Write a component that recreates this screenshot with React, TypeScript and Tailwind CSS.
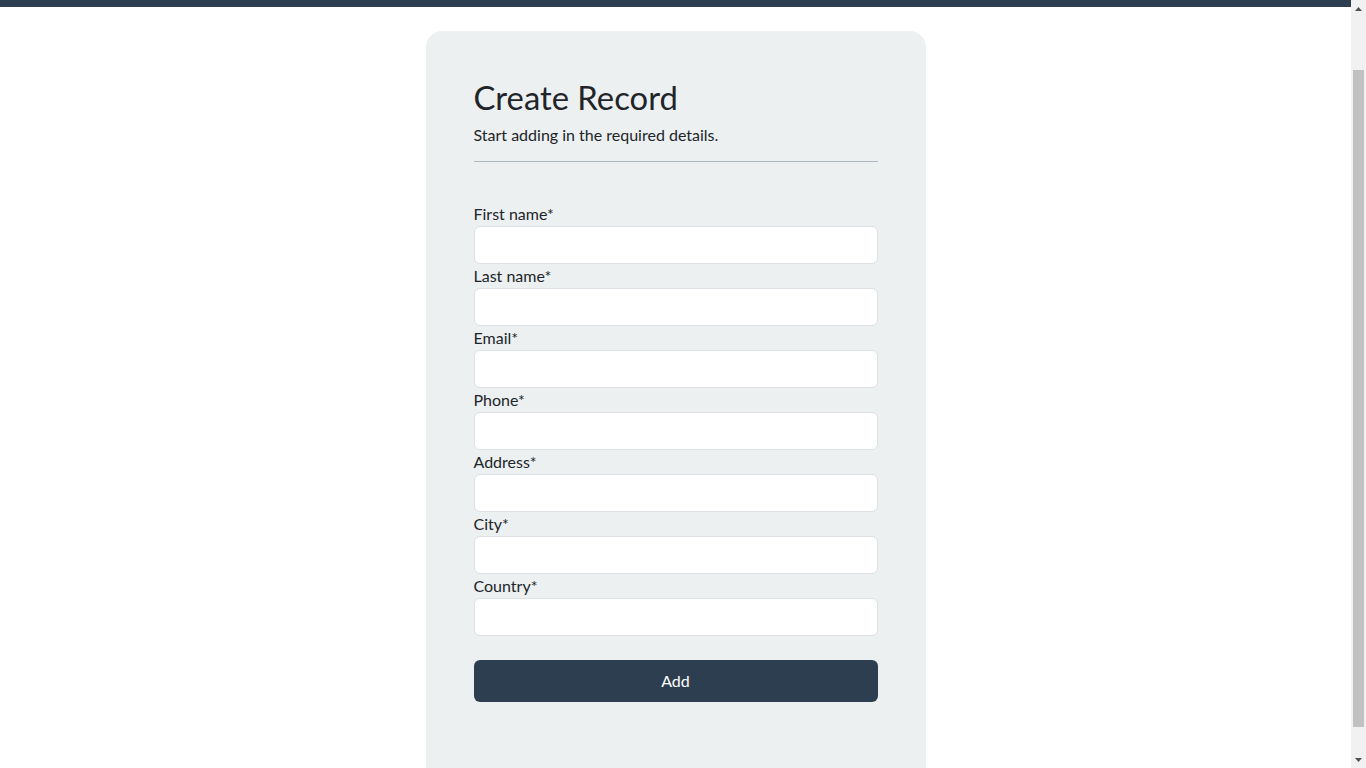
import React, { useLayoutEffect } from "react";

const fields = ["First name", "Last name", "Email", "Phone", "Address", "City", "Country"];

function FakeScrollbar() {
  return (
    <div className="fixed right-0 top-0 flex h-screen w-[15px] flex-col bg-[#f1f1f1]">
      <div className="flex h-[17px] items-center justify-center">
        <svg width="7" height="4" viewBox="0 0 7 4">
          <path d="M0 4 L3.5 0 L7 4 Z" fill="#505050" />
        </svg>
      </div>
      <div className="flex-1 px-[2px] pt-[53px] pb-[24px]">
        <div className="h-full w-full bg-[#c1c1c1]" />
      </div>
      <div className="flex h-[17px] items-center justify-center">
        <svg width="7" height="4" viewBox="0 0 7 4">
          <path d="M0 0 L7 0 L3.5 4 Z" fill="#505050" />
        </svg>
      </div>
    </div>
  );
}

export default function App() {
  useLayoutEffect(() => {
    window.scrollTo(0, 62);
  }, []);
  return (
    <div className="min-h-screen bg-white pr-[15px] text-[#212529]" style={{ fontFamily: "Lato, 'Open Sans', sans-serif" }}>
      <header className="h-[69px] bg-[#2c3e50]" />
      <main className="pt-[24px]">
        <div className="mx-auto w-[500px] rounded-[16px] bg-[#ecf0f1] px-[48px] pt-[45px] pb-[95px]">
          <h1 className="text-[32.8px] leading-[43px] font-normal text-[#212529]">Create Record</h1>
          <p className="mt-[4px] text-[16px] leading-[24px]">Start adding in the required details.</p>
          <hr className="mt-[14px] border-0 border-t border-[#adb5bd]" />
          <form className="mt-[40px] flex flex-col" onSubmit={(e) => e.preventDefault()}>
            {fields.map((f) => (
              <div key={f} className="flex flex-col">
                <label className="text-[16px] leading-[24px]">{f}*</label>
                <input
                  type="text"
                  className="h-[38px] w-full rounded-[6px] border border-[#dee2e6] bg-white px-3 text-[16px] outline-none"
                />
              </div>
            ))}
            <button
              type="submit"
              className="mt-[24px] h-[42px] w-full rounded-[6px] bg-[#2c3e50] text-[16px] text-white"
            >
              Add
            </button>
          </form>
        </div>
      </main>
      <FakeScrollbar />
    </div>
  );
}
